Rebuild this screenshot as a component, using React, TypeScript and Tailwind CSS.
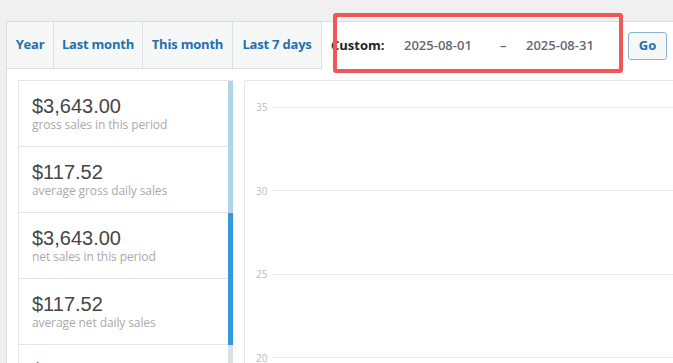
import React from "react";

const tabs = [
  { label: "Year", w: "w-[47px]" },
  { label: "Last month", w: "w-[89px]" },
  { label: "This month", w: "w-[90px]" },
  { label: "Last 7 days", w: "w-[89px]" }
];

const legend = [
  { amount: "$3,643.00", label: "gross sales in this period", bar: "bg-[#b1d4ea]" },
  { amount: "$117.52", label: "average gross daily sales", bar: "bg-[#b1d4ea]" },
  { amount: "$3,643.00", label: "net sales in this period", bar: "bg-[#3498db]" },
  { amount: "$117.52", label: "average net daily sales", bar: "bg-[#3498db]" },
  { amount: "$10.00", label: "orders placed", bar: "bg-[#dbe1e3]" }
];

const ticks = ["35", "30", "25", "20", "15"];

export default function App() {
  return (
    <div className="relative h-[363px] w-[673px] overflow-hidden bg-[#f0f0f1] pl-[6px] pt-[21px] font-['Open_Sans',sans-serif]">
      <div className="h-[400px] w-[760px] border-l border-t border-[#dcdcde] bg-white">
        <div className="flex h-[47px]">
          <ul className="flex border-b border-[#dfdfdf] bg-[#f6f7f7]">
            {tabs.map((t) => (
              <li
                key={t.label}
                className={`${t.w} flex items-center justify-center border-r border-[#dfdfdf] text-[13px] font-bold tracking-[-0.2px] text-[#2271b1]`}
              >
                {t.label}
              </li>
            ))}
          </ul>
          <div className="flex flex-1 items-center bg-white pl-[9px] text-[13px] font-semibold">
            <span className="w-[73px] font-bold text-[#1d2327]">Custom:</span>
            <span className="w-[96px] text-[#646970]">2025-08-01</span>
            <span className="w-[26px] text-[#646970]">–</span>
            <span className="w-[102px] text-[#646970]">2025-08-31</span>
            <button className="h-[28px] w-[39px] rounded-[3px] border border-[#8db3d3] bg-[#f6f7f7] text-[13px] font-bold text-[#2271b1]">
              Go
            </button>
          </div>
        </div>

        <div className="flex gap-[11px] pl-[11px] pt-[11px]">
          <ul className="w-[215px] border-l border-t border-[#e5e5e5]">
            {legend.map((item, i) => (
              <li key={i} className="flex h-[66px]">
                <div className="flex-1 border-b border-[#e5e5e5] pl-[13px] pt-[14px]">
                  <strong className="block font-['Liberation_Sans',Arial,sans-serif] text-[20px] font-normal leading-[22px] text-[#464646]">
                    {item.amount}
                  </strong>
                  <span className="block text-[12px] leading-[16px] tracking-[-0.1px] text-[#aaaaaa]">
                    {item.label}
                  </span>
                </div>
                <div className={`w-[5px] ${item.bar}`} />
              </li>
            ))}
          </ul>

          <div className="flex-1 rounded-tl-[3px] border-l border-t border-[#e5e5e5] pl-[11px] pt-[20px]">
            <div className="flex flex-col gap-[71.5px]">
              {ticks.map((t) => (
                <div key={t} className="flex h-[12px] items-center gap-[6px]">
                  <span className="w-[10px] text-[10px] leading-none text-[#bbbbbb]">{t}</span>
                  <div className="h-px flex-1 bg-[#e8e8e8]" />
                </div>
              ))}
            </div>
          </div>
        </div>
      </div>

      <div className="absolute left-[333px] top-[13px] h-[60px] w-[290px] rounded-[3px] border-[4px] border-[#ef5858]" />
    </div>
  );
}
